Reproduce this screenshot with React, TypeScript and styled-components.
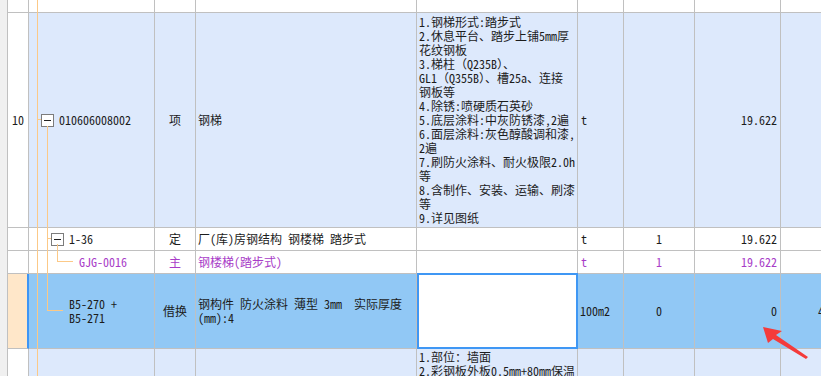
import styled, { createGlobalStyle } from "styled-components";

type Tone = "white" | "item" | "active";
type Align = "left" | "center" | "right";

const tones: Record<Tone, string> = {
  white: "#ffffff",
  item: "#dde9fc",
  active: "#91c8f5",
};

const W = { no: 21, code: 126, type: 41, name: 221, desc: 161, unit: 46, qty: 71, amt: 86, extra: 80 };

const GlobalStyle = createGlobalStyle`
  html, body { margin: 0; padding: 0; background: #fff; }
  body {
    font-family: "Noto Sans Mono CJK SC", "Noto Sans CJK SC", "Liberation Mono", monospace;
    font-size: 12px;
    color: #1c1c1c;
  }
`;

const Page = styled.div`
  position: relative;
  width: 821px;
  height: 376px;
  overflow: hidden;
  display: flex;
`;

const Strip = styled.div`
  flex: none;
  box-sizing: border-box;
  width: 8px;
  background: #f0f0f0;
  border-right: 1px solid #c0c0c0;
`;

const Sheet = styled.div`
  flex: none;
  display: flex;
  flex-direction: column;
`;

const Row = styled.div<{ $h: number }>`
  flex: none;
  display: flex;
  height: ${(p) => p.$h}px;
`;

const Cell = styled.div<{ $w: number; $tone: Tone; $align?: Align; $pad?: string; $top?: boolean; $purple?: boolean }>`
  flex: none;
  box-sizing: border-box;
  width: ${(p) => p.$w}px;
  height: 100%;
  border-right: 1px solid #c0c0c0;
  border-bottom: 1px solid #c0c0c0;
  background: ${(p) => tones[p.$tone]};
  display: flex;
  align-items: ${(p) => (p.$top ? "flex-start" : "center")};
  justify-content: ${(p) => (p.$align === "center" ? "center" : p.$align === "right" ? "flex-end" : "flex-start")};
  padding: ${(p) => p.$pad ?? "0 3px"};
  white-space: nowrap;
  overflow: hidden;
  line-height: 14px;
  color: ${(p) => (p.$purple ? "#a83cc8" : "inherit")};
`;

const NoCell = styled(Cell)<{ $selected?: boolean }>`
  background: ${(p) => (p.$selected ? "#ffe7c9" : "#ffffff")};
  border-right: ${(p) => (p.$selected ? "2px solid #3d95f5" : "1px solid #c0c0c0")};
`;

const EditCell = styled(Cell)`
  position: relative;
  background: #ffffff;
  overflow: visible;
  &::after {
    content: "";
    position: absolute;
    top: -1px;
    left: 0;
    right: -1px;
    bottom: -1px;
    border: 2px solid #3f97f4;
  }
`;

const Lines = styled.div`
  white-space: pre;
  line-height: 14px;
`;

const Toggle = styled.span`
  flex: none;
  box-sizing: border-box;
  width: 13px;
  height: 13px;
  margin-right: 5px;
  border: 1px solid #7c7c7c;
  background: #fff;
  display: inline-flex;
  align-items: center;
  justify-content: center;
  &::before {
    content: "";
    width: 7px;
    height: 1px;
    background: #222;
  }
`;

const Overlay = styled.svg`
  position: absolute;
  left: 0;
  top: 0;
  width: 821px;
  height: 376px;
  pointer-events: none;
`;

const spec = `1.钢梯形式:踏步式
2.休息平台、踏步上铺5mm厚
花纹钢板
3.梯柱（Q235B）、
GL1（Q355B）、槽25a、连接
钢板等
4.除锈:喷硬质石英砂
5.底层涂料:中灰防锈漆,2遍
6.面层涂料:灰色醇酸调和漆,
2遍
7.刷防火涂料、耐火极限2.0h
等
8.含制作、安装、运输、刷漆
等
9.详见图纸`;

const nextSpec = `1.部位：墙面
2.彩钢板外板0.5mm+80mm保温`;

const TreeLines = () => (
  <Overlay viewBox="0 0 821 376">
    <g stroke="#fcc987" strokeWidth="1" fill="none" shapeRendering="crispEdges">
      <path d="M37.5 0V376" />
      <path d="M37 119.5H41" />
      <path d="M47.5 126V310" />
      <path d="M47 310.5H63" />
      <path d="M47 238.5H51" />
      <path d="M57.5 244V261" />
      <path d="M57 261.5H73" />
    </g>
  </Overlay>
);

const Arrow = () => (
  <Overlay viewBox="0 0 821 376">
    <polygon points="763,327 782,331 776,335 808,357 806,359 773,339 768,343" fill="#f43b3b" />
  </Overlay>
);

export default function App() {
  return (
    <>
      <GlobalStyle />
      <Page>
        <Strip />
        <Sheet>
          <Row $h={13}>
            <NoCell $w={W.no} $tone="white" />
            <Cell $w={W.code} $tone="white" />
            <Cell $w={W.type} $tone="white" />
            <Cell $w={W.name} $tone="white" />
            <Cell $w={W.desc} $tone="white" />
            <Cell $w={W.unit} $tone="white" />
            <Cell $w={W.qty} $tone="white" />
            <Cell $w={W.amt} $tone="white" />
            <Cell $w={W.extra} $tone="white" />
          </Row>

          <Row $h={215}>
            <NoCell $w={W.no} $tone="white" $align="center" $pad="0">10</NoCell>
            <Cell $w={W.code} $tone="item" $pad="0 0 0 12px">
              <Toggle />
              010606008002
            </Cell>
            <Cell $w={W.type} $tone="item" $align="center" $pad="0">项</Cell>
            <Cell $w={W.name} $tone="item" $pad="0 2px">钢梯</Cell>
            <Cell $w={W.desc} $tone="item" $pad="0 2px">
              <Lines>{spec}</Lines>
            </Cell>
            <Cell $w={W.unit} $tone="item">t</Cell>
            <Cell $w={W.qty} $tone="item" $align="center" />
            <Cell $w={W.amt} $tone="item" $align="right">19.622</Cell>
            <Cell $w={W.extra} $tone="item" />
          </Row>

          <Row $h={23}>
            <NoCell $w={W.no} $tone="white" />
            <Cell $w={W.code} $tone="white" $pad="0 0 0 22px">
              <Toggle />
              1-36
            </Cell>
            <Cell $w={W.type} $tone="white" $align="center" $pad="0">定</Cell>
            <Cell $w={W.name} $tone="white" $pad="0 2px">厂(库)房钢结构 钢楼梯 踏步式</Cell>
            <Cell $w={W.desc} $tone="white" />
            <Cell $w={W.unit} $tone="white">t</Cell>
            <Cell $w={W.qty} $tone="white" $align="center">1</Cell>
            <Cell $w={W.amt} $tone="white" $align="right">19.622</Cell>
            <Cell $w={W.extra} $tone="white" />
          </Row>

          <Row $h={23}>
            <NoCell $w={W.no} $tone="white" />
            <Cell $w={W.code} $tone="white" $pad="0 0 0 50px" $purple>GJG-0016</Cell>
            <Cell $w={W.type} $tone="white" $align="center" $pad="0" $purple>主</Cell>
            <Cell $w={W.name} $tone="white" $pad="0 2px" $purple>钢楼梯(踏步式)</Cell>
            <Cell $w={W.desc} $tone="white" />
            <Cell $w={W.unit} $tone="white" $purple>t</Cell>
            <Cell $w={W.qty} $tone="white" $align="center" $purple>1</Cell>
            <Cell $w={W.amt} $tone="white" $align="right" $purple>19.622</Cell>
            <Cell $w={W.extra} $tone="white" />
          </Row>

          <Row $h={75}>
            <NoCell $w={W.no} $tone="active" $selected />
            <Cell $w={W.code} $tone="active" $pad="0 0 0 40px">
              <Lines>{"B5-270 +\nB5-271"}</Lines>
            </Cell>
            <Cell $w={W.type} $tone="active" $align="center" $pad="0">借换</Cell>
            <Cell $w={W.name} $tone="active" $pad="0 2px">
              <Lines>{"钢构件 防火涂料 薄型 3mm  实际厚度\n(mm):4"}</Lines>
            </Cell>
            <EditCell $w={W.desc} $tone="white" />
            <Cell $w={W.unit} $tone="active" $pad="0 2px">100m2</Cell>
            <Cell $w={W.qty} $tone="active" $align="center">0</Cell>
            <Cell $w={W.amt} $tone="active" $align="right">0</Cell>
            <Cell $w={W.extra} $tone="active" $pad="0 0 0 37px">4</Cell>
          </Row>

          <Row $h={40}>
            <NoCell $w={W.no} $tone="white" />
            <Cell $w={W.code} $tone="item" />
            <Cell $w={W.type} $tone="item" />
            <Cell $w={W.name} $tone="item" />
            <Cell $w={W.desc} $tone="item" $pad="1px 2px 0" $top>
              <Lines>{nextSpec}</Lines>
            </Cell>
            <Cell $w={W.unit} $tone="item" />
            <Cell $w={W.qty} $tone="item" />
            <Cell $w={W.amt} $tone="item" />
            <Cell $w={W.extra} $tone="item" />
          </Row>
        </Sheet>
        <TreeLines />
        <Arrow />
      </Page>
    </>
  );
}
